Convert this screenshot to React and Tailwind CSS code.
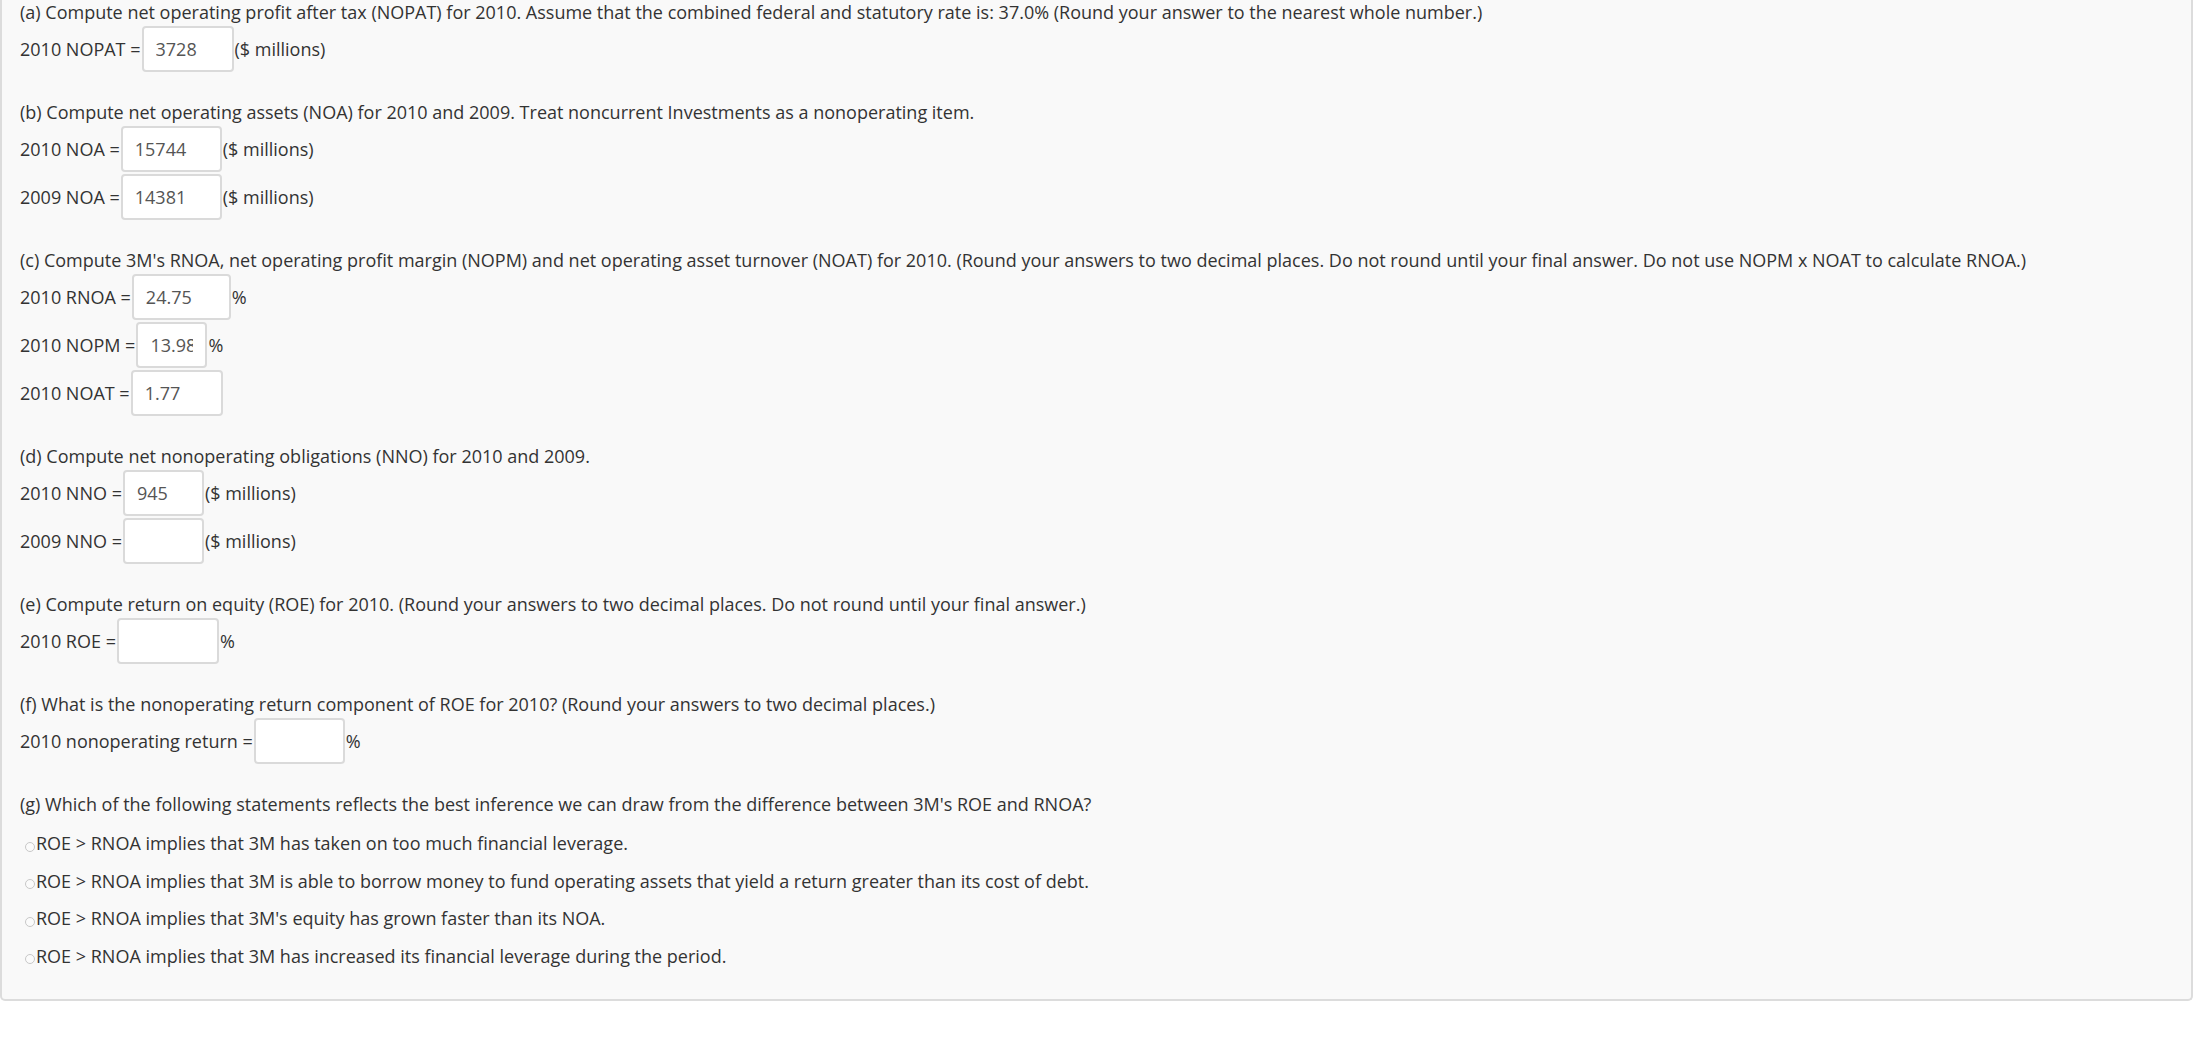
import React from 'react'

function Field({ label, value, width, unit, first }) {
    return (
        <div className={`flex items-center h-[46px] ${first ? 'mt-[1px]' : 'mt-[2px]'}`}>
            <span>{label}</span>
            <input
                readOnly
                value={value || ''}
                className={`${width} h-[46px] ml-[1px] px-[12px] bg-white border-2 border-[#dadada] rounded-[4px] text-[#555] outline-none`}
            />
            {unit && <span className="ml-[1px]">{unit}</span>}
        </div>
    )
}

function Section({ title, children }) {
    return (
        <div className="mb-[28px]">
            <div className="h-[25px] leading-[25px] whitespace-nowrap">{title}</div>
            {children}
        </div>
    )
}

const options = [
    'ROE > RNOA implies that 3M has taken on too much financial leverage.',
    'ROE > RNOA implies that 3M is able to borrow money to fund operating assets that yield a return greater than its cost of debt.',
    "ROE > RNOA implies that 3M's equity has grown faster than its NOA.",
    'ROE > RNOA implies that 3M has increased its financial leverage during the period.',
]

export default function App() {
    return (
        <div className="w-[2198px] min-h-[1056px] bg-white font-['Open_Sans',sans-serif] text-[18px] text-[#333]">
            <div className="mr-[5px] bg-[#f9f9f9] border-2 border-t-0 border-[#dcdcdc] rounded-b-[5px] pl-[18px] pb-[24px]">
                <Section title="(a) Compute net operating profit after tax (NOPAT) for 2010. Assume that the combined federal and statutory rate is: 37.0% (Round your answer to the nearest whole number.)">
                    <Field first label="2010 NOPAT =" value="3728" width="w-[92px]" unit="($ millions)" />
                </Section>

                <Section title="(b) Compute net operating assets (NOA) for 2010 and 2009. Treat noncurrent Investments as a nonoperating item.">
                    <Field first label="2010 NOA =" value="15744" width="w-[101px]" unit="($ millions)" />
                    <Field label="2009 NOA =" value="14381" width="w-[101px]" unit="($ millions)" />
                </Section>

                <Section title="(c) Compute 3M's RNOA, net operating profit margin (NOPM) and net operating asset turnover (NOAT) for 2010. (Round your answers to two decimal places. Do not round until your final answer. Do not use NOPM x NOAT to calculate RNOA.)">
                    <Field first label="2010 RNOA =" value="24.75" width="w-[99px]" unit="%" />
                    <Field label="2010 NOPM =" value="13.98" width="w-[71px]" unit="%" />
                    <Field label="2010 NOAT =" value="1.77" width="w-[92px]" />
                </Section>

                <Section title="(d) Compute net nonoperating obligations (NNO) for 2010 and 2009.">
                    <Field first label="2010 NNO =" value="945" width="w-[81px]" unit="($ millions)" />
                    <Field label="2009 NNO =" value="" width="w-[81px]" unit="($ millions)" />
                </Section>

                <Section title="(e) Compute return on equity (ROE) for 2010. (Round your answers to two decimal places. Do not round until your final answer.)">
                    <Field first label="2010 ROE =" value="" width="w-[102px]" unit="%" />
                </Section>

                <Section title="(f) What is the nonoperating return component of ROE for 2010? (Round your answers to two decimal places.)">
                    <Field first label="2010 nonoperating return =" value="" width="w-[91px]" unit="%" />
                </Section>

                <div>
                    <div className="h-[25px] leading-[25px] whitespace-nowrap">
                        (g) Which of the following statements reflects the best inference we can draw from the difference between 3M's ROE and RNOA?
                    </div>
                    <div className="mt-[8px]">
                        {options.map((opt) => (
                            <div key={opt} className="flex items-center h-[37.5px] pl-[5px]">
                                <span className="inline-block w-[10px] h-[10px] rounded-full border border-[#c8c8c8] bg-[#fbfbfb] translate-y-[3px] mr-[1px]" />
                                <span>{opt}</span>
                            </div>
                        ))}
                    </div>
                </div>
            </div>
        </div>
    )
}
